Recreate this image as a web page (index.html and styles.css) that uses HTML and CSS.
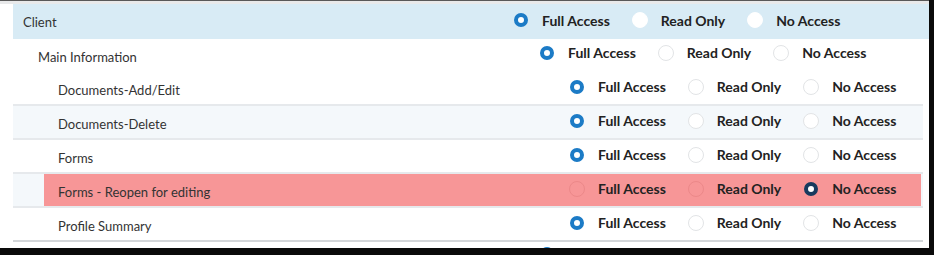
FILE: index.html
```html
<!DOCTYPE html>
<html>
<head>
<meta charset="utf-8">
<link rel="stylesheet" href="styles.css">
</head>
<body>
<div class="frame">
  <div class="topline"></div>
  <div class="table">
    <div class="row lvl0 client">
      <div class="line">
        <div class="label">Client</div>
        <div class="opts">
          <label class="opt"><span class="radio on"></span>Full Access</label>
          <label class="opt"><span class="radio"></span>Read Only</label>
          <label class="opt"><span class="radio"></span>No Access</label>
        </div>
      </div>
    </div>
    <div class="row lvl1 noborder">
      <div class="line">
        <div class="label">Main Information</div>
        <div class="opts">
          <label class="opt"><span class="radio on"></span>Full Access</label>
          <label class="opt"><span class="radio"></span>Read Only</label>
          <label class="opt"><span class="radio"></span>No Access</label>
        </div>
      </div>
    </div>
    <div class="row lvl2">
      <div class="line">
        <div class="label">Documents-Add/Edit</div>
        <div class="opts">
          <label class="opt"><span class="radio on"></span>Full Access</label>
          <label class="opt"><span class="radio"></span>Read Only</label>
          <label class="opt"><span class="radio"></span>No Access</label>
        </div>
      </div>
    </div>
    <div class="row lvl2 alt">
      <div class="line">
        <div class="label">Documents-Delete</div>
        <div class="opts">
          <label class="opt"><span class="radio on"></span>Full Access</label>
          <label class="opt"><span class="radio"></span>Read Only</label>
          <label class="opt"><span class="radio"></span>No Access</label>
        </div>
      </div>
    </div>
    <div class="row lvl2">
      <div class="line">
        <div class="label">Forms</div>
        <div class="opts">
          <label class="opt"><span class="radio on"></span>Full Access</label>
          <label class="opt"><span class="radio"></span>Read Only</label>
          <label class="opt"><span class="radio"></span>No Access</label>
        </div>
      </div>
    </div>
    <div class="row lvl2 alt danger">
      <div class="line">
        <div class="label">Forms - Reopen for editing</div>
        <div class="opts">
          <label class="opt"><span class="radio"></span>Full Access</label>
          <label class="opt"><span class="radio"></span>Read Only</label>
          <label class="opt"><span class="radio on"></span>No Access</label>
        </div>
      </div>
    </div>
    <div class="row lvl2 last">
      <div class="line">
        <div class="label">Profile Summary</div>
        <div class="opts">
          <label class="opt"><span class="radio on"></span>Full Access</label>
          <label class="opt"><span class="radio"></span>Read Only</label>
          <label class="opt"><span class="radio"></span>No Access</label>
        </div>
      </div>
    </div>
    <div class="row lvl1 noborder peek">
      <div class="line">
        <div class="label"></div>
        <div class="opts">
          <span class="radio on"></span>
        </div>
      </div>
    </div>
  </div>
</div>
</body>
</html>
```
FILE: styles.css
```css
html, body {
  margin: 0;
  padding: 0;
  background: #0a0a0a;
}
.frame {
  width: 929px;
  height: 248px;
  background: #ffffff;
  overflow: hidden;
  box-sizing: border-box;
  border-top: 1px solid #585858;
  font-family: Lato, "Open Sans", sans-serif;
}
.topline {
  height: 3px;
  background: #e8e9ea;
}
.table {
  margin-left: 13px;
  width: 910px;
}
.row {
  box-sizing: border-box;
  height: 34px;
  border-bottom: 2px solid #e6e9ec;
  display: flex;
}
.row.noborder {
  border-bottom: none;
  height: 33px;
}
.row.client {
  width: 916px;
  height: 35px;
  background: #d8ebf5;
  border-bottom: none;
}
.row.alt {
  background: #f4f8fb;
}
.row.last {
  border-bottom-color: #d3d6d9;
}
.line {
  flex: 1;
  display: flex;
  align-items: center;
  box-sizing: border-box;
}
.label {
  flex: none;
  box-sizing: border-box;
  font-size: 13px;
  color: #333333;
  padding-top: 3px;
}
.client .label { padding-top: 1px; }
.lvl0 .label { width: 500px; padding-left: 10px; }
.lvl1 .label { width: 526px; padding-left: 25px; }
.lvl2 .line { margin-left: 31px; }
.lvl2 .label { width: 525px; padding-left: 14px; }
.row.danger .line {
  background: #f79697;
  margin-right: 2px;
}
.opts {
  display: flex;
  gap: 22px;
  padding-bottom: 3px;
}
.lvl1 .opts { padding-bottom: 6px; }
.peek .line { align-items: flex-start; }
.peek .opts { padding-top: 4px; }
.opt {
  display: flex;
  align-items: center;
  gap: 13px;
  font-size: 14px;
  font-weight: 700;
  color: #222;
}
.radio {
  width: 16px;
  height: 16px;
  box-sizing: border-box;
  border-radius: 50%;
  background: #ffffff;
  border: 1px solid #e2e4e6;
  position: relative;
  flex: none;
}
.client .radio {
  border-color: #ffffff;
}
.radio.on {
  border: none;
  background: transparent;
}
.radio.on::after {
  content: "";
  position: absolute;
  left: 1px;
  top: 1px;
  width: 14px;
  height: 14px;
  box-sizing: border-box;
  border-radius: 50%;
  border: 4px solid #1c7bc6;
  background: #ffffff;
}
.danger .radio {
  background: transparent;
  border-color: #ec8889;
}
.danger .radio.on {
  border: none;
}
.danger .radio.on::after {
  border-color: #183a5e;
}
```
